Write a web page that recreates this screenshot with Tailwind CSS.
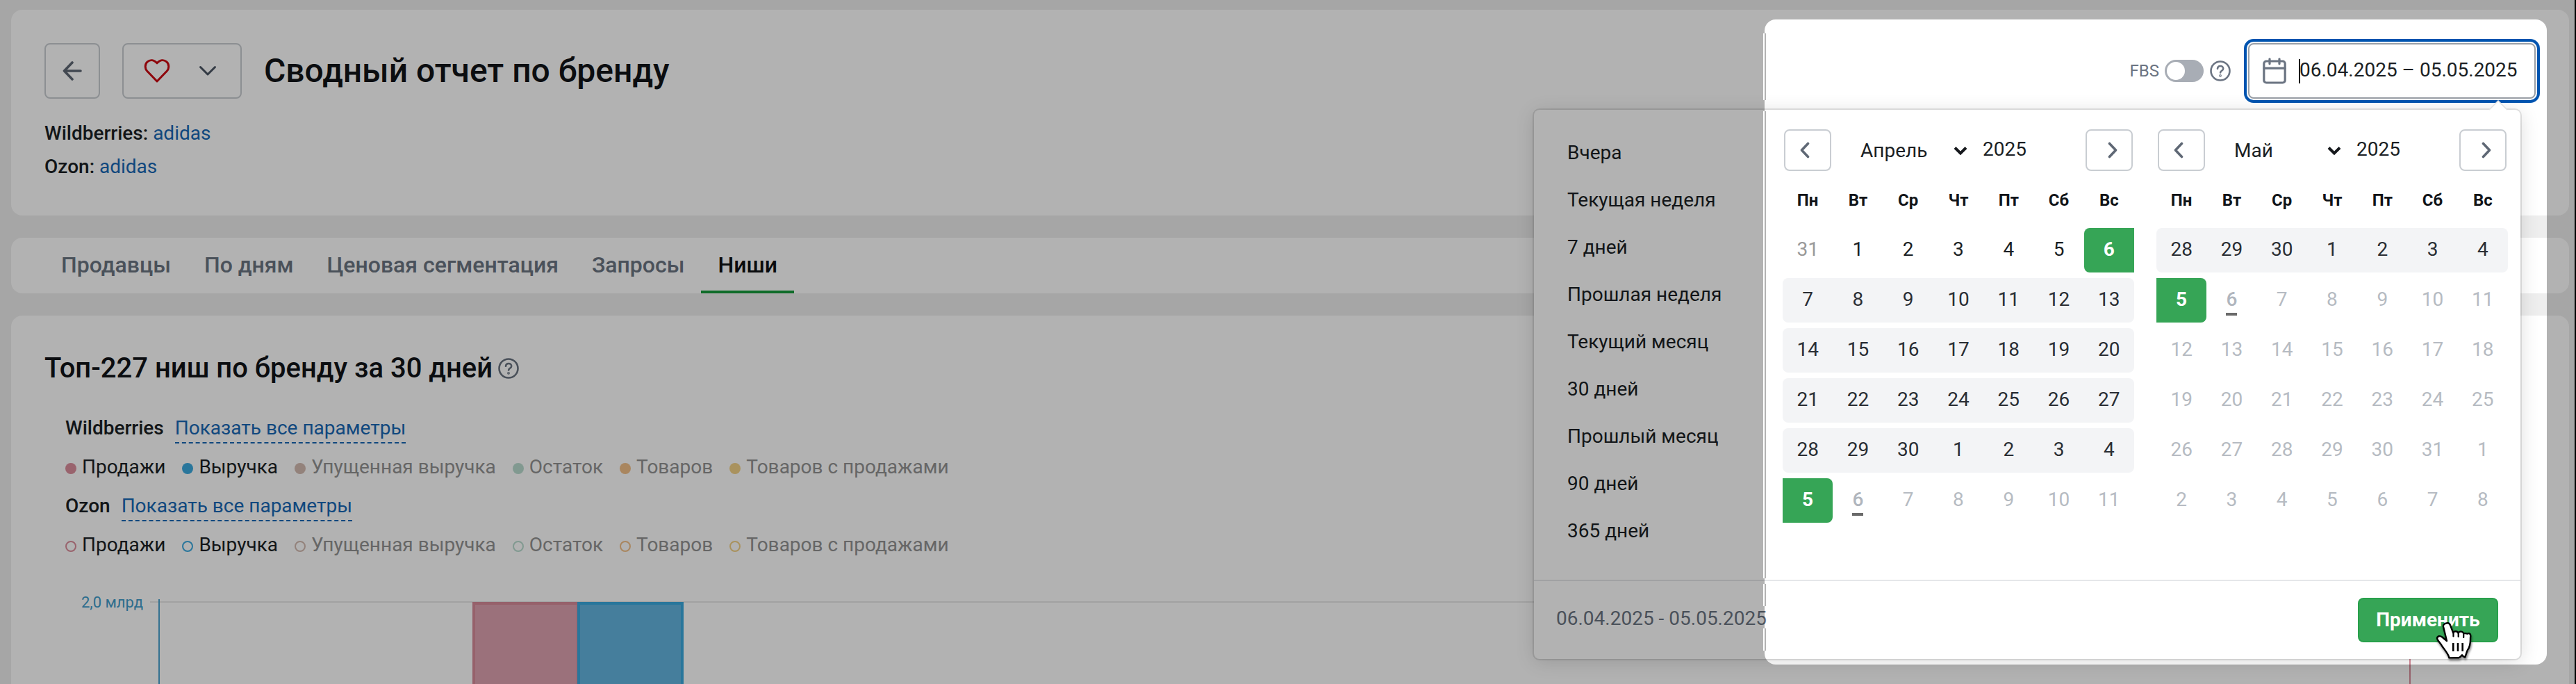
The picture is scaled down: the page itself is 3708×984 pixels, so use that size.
<!DOCTYPE html>
<html lang="ru">
<head>
<meta charset="utf-8">
<title>Сводный отчет по бренду</title>
<script src="https://cdn.jsdelivr.net/npm/@tailwindcss/browser@4"></script>
</head>
<body class="font-['Roboto',sans-serif] text-[28px] text-[#1b1f24]">
<div class="relative h-[984px] w-[3708px] overflow-hidden bg-[#eeeeee] pt-[14px] pl-4 pr-[10px]">

  <!-- Report header -->
  <header class="flex h-[296px] justify-between rounded-2xl bg-white pt-12 pr-12 pl-12">
    <div>
      <div class="flex items-center">
        <button class="flex size-20 items-center justify-center rounded-lg border-2 border-[#c9cdd2]">
          <svg class="h-7 w-7" viewBox="0 0 28 28" fill="none" stroke="#5f6875" stroke-width="3.6" stroke-linecap="round" stroke-linejoin="round"><path d="M26 14H2.5M14 2 2.5 14 14 26"/></svg>
        </button>
        <button class="ml-8 flex h-20 w-[172px] items-center rounded-lg border-2 border-[#c9cdd2] pl-[29px]">
          <svg class="h-[36px] w-[38px]" viewBox="0 0 38 36" fill="none" stroke="#cc0a12" stroke-width="3" stroke-linejoin="round"><path d="M19 33 4.8 18.3C1.2 14.300 1.400 8.200 5.200 4.900 9.200 1.400 14.600 2 19 6.800 23.400 2 28.800 1.400 32.800 4.900 36.600 8.200 36.800 14.300 33.200 18.300Z"/></svg>
          <svg class="ml-[40px] h-4 w-[28px]" viewBox="0 0 28 16" fill="none" stroke="#4b5563" stroke-width="3" stroke-linecap="round" stroke-linejoin="round"><path d="M3.500 2.500 14 13 24.500 2.500"/></svg>
        </button>
        <h1 class="ml-8 text-[48px] leading-[80px] font-medium text-[#111418]">Сводный отчет по бренду</h1>
      </div>
      <div class="mt-[26px] leading-[48px]">
        <p><span class="font-medium">Wildberries:</span> <a class="text-[#1767b5]">adidas</a></p>
        <p><span class="font-medium">Ozon:</span> <a class="text-[#1767b5]">adidas</a></p>
      </div>
    </div>
    <div class="flex h-20 items-center">
      <span class="text-[24px] text-[#6b7482]">FBS</span>
      <span class="ml-2 flex h-8 w-14 items-center rounded-full bg-[#a8adb5] pl-[3px]"><span class="size-[26px] rounded-full bg-white"></span></span>
      <svg class="ml-[9px] size-[30px]" viewBox="0 0 30 30" fill="none" stroke="#6b7482" stroke-width="2.600" stroke-linecap="round"><circle cx="15" cy="15" r="13.500"/><path d="M11 11.800c.200-2.400 1.900-3.800 4.100-3.800 2.300 0 4.100 1.500 4.100 3.700 0 3-4.100 3-4.100 5.800"/><circle cx="15" cy="21.800" r=".6"/></svg>
      <div class="ml-[25px] flex h-20 w-[414px] items-center rounded-lg border-2 border-[#9a9fa6] pl-[19px] outline-4 outline-offset-2 outline-[#0054b0]">
        <svg class="h-[38px] w-[34px]" viewBox="0 0 34 38" fill="none" stroke="#6b7482" stroke-width="3.200" stroke-linecap="round"><rect x="1.800" y="5" width="30.400" height="31" rx="3.500"/><path d="M2 15.200h30M10 1.800v7M24 1.800v7"/></svg>
        <span class="ml-[18px] h-[35px] w-[2px] bg-black"></span>
        <span class="-ml-px whitespace-nowrap pb-0.5">06.04.2025 – 05.05.2025</span>
      </div>
    </div>
  </header>

  <!-- Tabs -->
  <nav class="mt-8 flex h-20 rounded-2xl bg-white pl-12 text-[32px] leading-[78px] font-medium text-[#6b7482]">
    <a class="px-6">Продавцы</a><a class="px-6">По дням</a><a class="px-6">Ценовая сегментация</a><a class="px-6">Запросы</a><a class="px-6 text-[#0d1014] shadow-[inset_0_-4px_0_#169b3c]">Ниши</a>
  </nav>

  <!-- Niches chart -->
  <section class="mt-8 h-[560px] rounded-t-2xl bg-white pt-[52px]">
    <div class="flex items-center pl-12">
      <h2 class="text-[40px] leading-[48px] font-medium text-[#111418]">Топ-227 ниш по бренду за 30 дней</h2>
      <svg class="ml-2 size-[30px]" viewBox="0 0 30 30" fill="none" stroke="#6b7482" stroke-width="2.600" stroke-linecap="round"><circle cx="15" cy="15" r="13.500"/><path d="M11 11.800c.200-2.400 1.900-3.800 4.100-3.800 2.300 0 4.100 1.500 4.100 3.700 0 3-4.100 3-4.100 5.800"/><circle cx="15" cy="21.800" r=".6"/></svg>
    </div>
    <div class="mt-[42px] pl-[78px] leading-[40px]">
      <div class="flex h-14 items-start gap-4"><span class="font-medium">Wildberries</span><a class="border-b-2 border-dashed border-[#1767b5] text-[#1767b5]">Показать все параметры</a></div>
      <div class="flex h-14 items-start gap-6">
        <span class="flex items-center gap-2"><i class="mt-1 size-4 rounded-full bg-[#dc8e9c]"></i>Продажи</span>
        <span class="flex items-center gap-2"><i class="mt-1 size-4 rounded-full bg-[#3ca9df]"></i>Выручка</span>
        <span class="flex items-center gap-2 text-[#939393]"><i class="mt-1 size-4 rounded-full bg-[#d3bab0]"></i>Упущенная выручка</span>
        <span class="flex items-center gap-2 text-[#939393]"><i class="mt-1 size-4 rounded-full bg-[#b9dccf]"></i>Остаток</span>
        <span class="flex items-center gap-2 text-[#939393]"><i class="mt-1 size-4 rounded-full bg-[#f3c089]"></i>Товаров</span>
        <span class="flex items-center gap-2 text-[#939393]"><i class="mt-1 size-4 rounded-full bg-[#f3d287]"></i>Товаров с продажами</span>
      </div>
      <div class="flex h-14 items-start gap-4"><span class="font-medium">Ozon</span><a class="border-b-2 border-dashed border-[#1767b5] text-[#1767b5]">Показать все параметры</a></div>
      <div class="flex h-10 items-start gap-6">
        <span class="flex items-center gap-2"><i class="mt-1 size-4 rounded-full border-2 border-[#dc8e9c]"></i>Продажи</span>
        <span class="flex items-center gap-2"><i class="mt-1 size-4 rounded-full border-2 border-[#3ca9df]"></i>Выручка</span>
        <span class="flex items-center gap-2 text-[#939393]"><i class="mt-1 size-4 rounded-full border-2 border-[#d3bab0]"></i>Упущенная выручка</span>
        <span class="flex items-center gap-2 text-[#939393]"><i class="mt-1 size-4 rounded-full border-2 border-[#b9dccf]"></i>Остаток</span>
        <span class="flex items-center gap-2 text-[#939393]"><i class="mt-1 size-4 rounded-full border-2 border-[#f3c089]"></i>Товаров</span>
        <span class="flex items-center gap-2 text-[#939393]"><i class="mt-1 size-4 rounded-full border-2 border-[#f3d287]"></i>Товаров с продажами</span>
      </div>
    </div>
    <svg class="block h-[180px] w-[3682px]" viewBox="16 804 3682 180">
      <path d="M216 866H3470" stroke="#e8e8e8" stroke-width="2"/>
      <path d="M229 862V984" stroke="#4aa3cf" stroke-width="2"/>
      <path d="M3469 862V984" stroke="#d98c9b" stroke-width="2"/>
      <text x="117" y="874" font-size="22" fill="#3f9ccb">2,0 млрд</text>
      <rect x="682" y="868" width="150" height="140" fill="#dfa3b0" stroke="#d78c9a" stroke-width="4"/>
      <rect x="833" y="868" width="149" height="140" fill="#63b5e0" stroke="#3ca9df" stroke-width="4"/>
    </svg>
  </section>

  <!-- Period popup -->
  <div class="absolute top-[158px] left-[2208px] h-[790px] w-[1420px] rounded-lg bg-white shadow-[0_0_0_2px_rgba(0,0,0,0.10),0_4px_28px_rgba(0,0,0,0.14)]">
    <svg class="absolute -top-[14px] left-[1374px] h-4 w-7" viewBox="0 0 28 16"><path d="M1 14.500 14 1 27 14.500V16H1Z" fill="#fff"/><path d="M1 14 14 1 27 14" fill="none" stroke="#e2e2e2" stroke-width="1.500"/></svg>
    <div class="flex h-[676px]">
      <ul class="w-[358px] pt-7 pl-12 leading-[68px]">
        <li>Вчера</li><li>Текущая неделя</li><li>7 дней</li><li>Прошлая неделя</li><li>Текущий месяц</li><li>30 дней</li><li>Прошлый месяц</li><li>90 дней</li><li>365 дней</li>
      </ul>
      <div id="months" class="flex gap-8 pt-7"></div>
    </div>
    <div class="flex h-[114px] items-center justify-between border-t-2 border-[#e5e7ea] pr-8 pl-8 text-[#6b7482]">
      <span class="pb-1">06.04.2025 - 05.05.2025</span>
      <button class="h-16 w-[202px] rounded-lg border-2 border-[#28a04b] bg-[#36a556] leading-[58px] font-bold text-white">Применить</button>
    </div>
  </div>

  <!-- Highlighted area of the tour, everything else is dimmed -->
  <div class="pointer-events-none absolute top-7 left-[2540px] h-[928px] w-[1126px] rounded-2xl shadow-[0_0_0_4000px_rgba(0,0,0,0.3)]"></div>
  <div class="absolute top-12 left-[2538px] h-24 w-1 border-l-2 border-white bg-[#b2b2b2]"></div>
  <div class="absolute top-[160px] left-[2538px] h-[672px] w-1 border-l-2 border-white bg-[#b2b2b2]"></div>
  <div class="absolute top-[840px] left-[2538px] h-8 w-1 border-l-2 border-white bg-[#b2b2b2]"></div>
  <div class="absolute top-[904px] left-[2538px] h-8 w-1 border-l-2 border-white bg-[#b2b2b2]"></div>
  <div class="absolute top-0 right-0 h-full w-[2px] bg-black"></div>

  <!-- Hand cursor -->
  <svg class="absolute top-[893px] left-[3505px] h-[60px] w-[56px] drop-shadow-[1px_3px_1.500px_rgba(0,0,0,0.45)]" viewBox="0 0 56 60">
    <path d="M16.500 3.500c2.600-.8 4.800.7 5.700 3.300l4 10.600c1.200-2.700 5.800-3 7.400.200 1.500-2.900 6.300-2.700 7.700.600 1.400 0 3.500-.4 5.300.500C50 17 52 19.500 51 24.500c.2 7-.5 13-4 17.500-1.300 2.500-2.200 6.500-3.800 10.500-1.500-.5-3-1.200-4.200-3.200-1.500 2-3 3.500-5 4l-13.500.100c-1.200-6-6.800-11.800-10.500-17.300-2-4-6.500-7.500-7-11 .5-3 4.300-4 7.300-1.600l6.700 5.500L12 8.500c-.5-2.500 1.500-4.500 4.500-5Z" fill="#fff" stroke="#000" stroke-width="2.400" stroke-linejoin="round"/>
    <path d="M26.500 17.500v5M33.700 18v5M41.200 19v5" stroke="#000" stroke-width="2.200" stroke-linecap="round"/>
    <path d="M26.300 32v12M33 32v12M39.700 32v12" stroke="#000" stroke-width="2.600"/>
  </svg>
</div>

<script>
  const weekdays = ['Пн','Вт','Ср','Чт','Пт','Сб','Вс'];
  const seq = (start, count) => Array.from({length: count}, (_, i) => start + i);
  // state per cell: n normal, o outside month, r in range, s range start, e range end, t today, d disabled
  const data = [
    {name: 'Апрель', days: [31, ...seq(1, 30), ...seq(1, 11)], state: 'onnnnns' + 'r'.repeat(28) + 'etddddd'},
    {name: 'Май', days: [28, 29, 30, ...seq(1, 31), ...seq(1, 8)], state: 'rrrrrrr' + 'et' + 'd'.repeat(33)}
  ];
  const style = {
    n: '', o: 'text-[#999999]', r: 'bg-[#f3f4f6] text-[#2a2e34] first:rounded-l-lg last:rounded-r-lg',
    s: 'bg-[#36a556] text-white font-bold rounded-l-lg', e: 'bg-[#36a556] text-white font-bold rounded-r-lg',
    t: 'relative text-[#b0b5bd] font-medium', d: 'text-[#b6bbc2]'
  };
  const btn = (shift, path) => `<button class="flex h-[60px] w-[68px] items-center justify-center rounded-lg border-2 border-[#c9cdd2]"><svg class="h-6 w-4 ${shift}" viewBox="0 0 16 24" fill="none" stroke="#5f6875" stroke-width="3.600" stroke-linecap="round" stroke-linejoin="round">${path}</svg></button>`;
  document.getElementById('months').innerHTML = data.map(m => {
    let rows = '';
    for (let r = 0; r < 6; r++) {
      rows += '<div class="grid h-16 grid-cols-7 text-center leading-[61px]">' + m.days.slice(r * 7, r * 7 + 7).map((d, c) => {
        const s = m.state[r * 7 + c];
        return `<span class="${style[s]}">${d}${s === 't' ? '<i class="absolute top-[50px] left-7 h-1 w-4 bg-[#6a6a6a]"></i>' : ''}</span>`;
      }).join('') + '</div>';
    }
    return `<div class="w-[506px]">
      <div class="flex h-[60px] items-center px-[2px]">${btn('mr-2', '<path d="M12.500 2.500 3.500 12l9 9.500"/>')}
        <span class="ml-[42px] flex w-[154px] items-center justify-between pt-[2px]">${m.name}<svg class="h-[14px] w-5" viewBox="0 0 20 14" fill="none" stroke="#15181c" stroke-width="4"><path d="m2 2.500 8 8 8-8"/></svg></span>
        <span class="ml-[22px] grow pb-[2px]">2025</span>${btn('ml-2', '<path d="M4.500 2.500 13.500 12l-9 9.500"/>')}
      </div>
      <div class="mt-[26px] grid h-8 grid-cols-7 text-center text-[24px] leading-8 font-bold text-[#111418]">${weekdays.map(w => `<span>${w}</span>`).join('')}</div>
      <div class="mt-6 flex flex-col gap-2">${rows}</div>
    </div>`;
  }).join('');
</script>
</body>
</html>
